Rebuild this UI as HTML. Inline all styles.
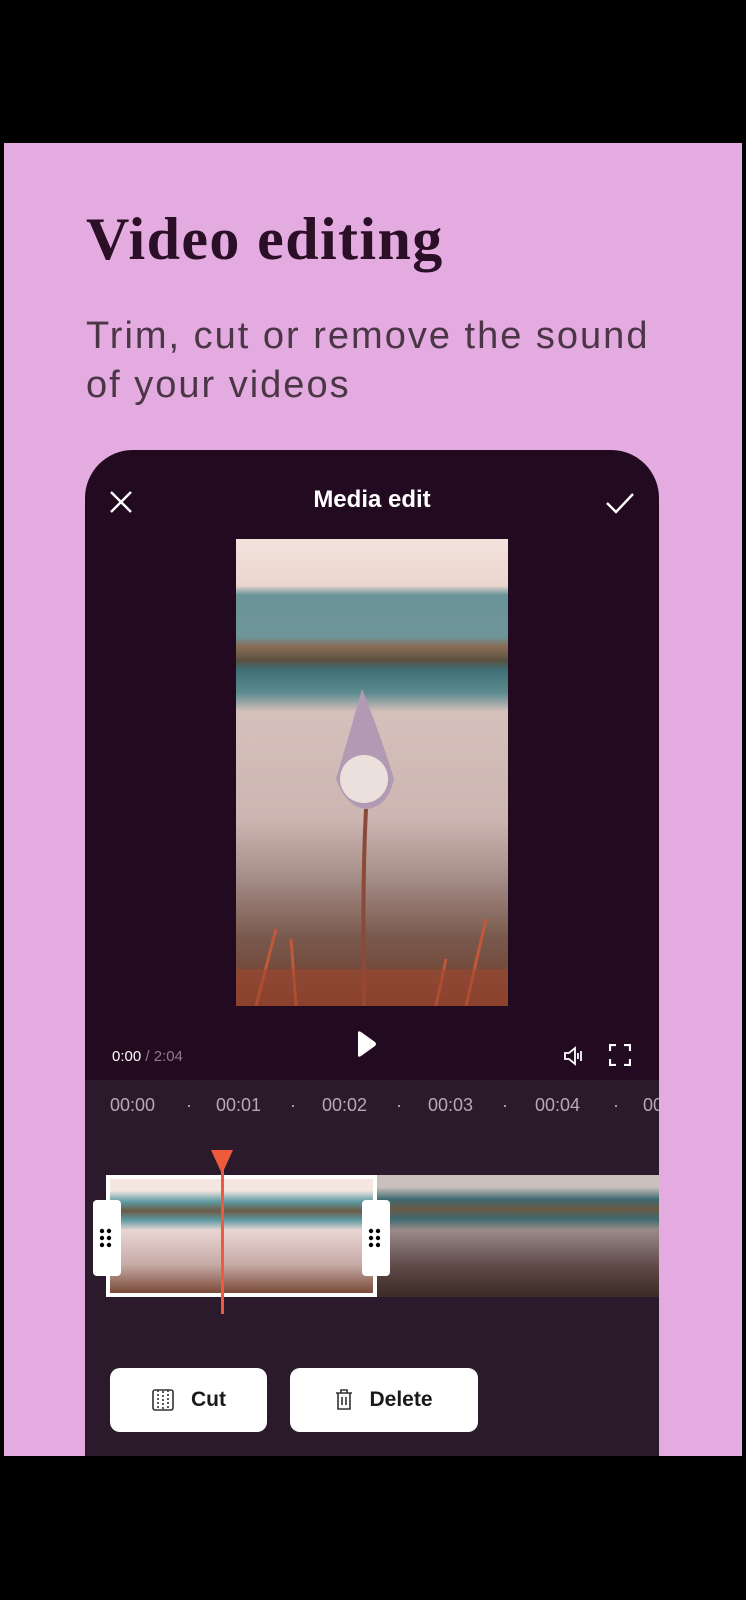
<!DOCTYPE html>
<html><head><meta charset="utf-8"><style>
*{margin:0;padding:0;box-sizing:border-box}
body{width:746px;height:1600px;background:#000;position:relative;overflow:hidden;font-family:"Liberation Sans",sans-serif}
.pink{position:absolute;left:4px;top:143px;width:738px;height:1313px;background:#e3abdf}
h1{position:absolute;left:86px;top:205px;font-family:"Liberation Serif",serif;font-weight:bold;font-size:60px;color:#2a0f26;letter-spacing:1.4px}
.sub{position:absolute;left:86px;top:312px;font-size:38px;line-height:49px;color:#4a3647;letter-spacing:2px}
.card{position:absolute;left:85px;top:450px;width:574px;height:1006px;background:#220a21;border-radius:48px 48px 0 0;overflow:hidden}
.tl{position:absolute;left:0;top:630px;width:574px;height:376px;background:#2b1a2b}
.t{position:absolute;color:#fff}
.photo{position:absolute;left:151px;top:89px;width:272px;height:467px;overflow:hidden;background:linear-gradient(180deg,#f3e2dc 0%,#ead6cf 10%,#6a9399 12%,#6d9599 21%,#8a6c55 23%,#5a5040 26%,#3f6f75 28%,#5d8c90 33%,#d6c0bb 37%,#cdb6b1 60%,#a78f8a 72%,#7a5a4e 85%,#6a3a2a 100%)}
.ticks{position:absolute;top:645px;font-size:18px;color:#b8a8b8}
.strip{position:absolute;left:21px;top:725px;width:553px;height:122px;background:linear-gradient(180deg,#c9c0bb 0%,#c9c0bb 10%,#3e6a70 20%,#6b5a45 28%,#3e6a70 36%,#9a8a88 45%,#5e4a48 75%,#3b2a25 100%)}
.sel{position:absolute;left:21px;top:725px;width:271px;height:122px;border:4px solid #fff;background:linear-gradient(180deg,#f5e6e2 0%,#f5e6e2 10%,#5c9aa2 20%,#6b5a45 28%,#5c9aa2 36%,#e8d6d2 45%,#c6aaa6 75%,#7a4a38 100%)}
.h{position:absolute;top:750px;width:28px;height:76px;background:#fff;border-radius:4px}
.btn{position:absolute;top:918px;height:64px;background:#fff;border-radius:10px;font-weight:bold;font-size:21px;color:#1a1a1a;display:flex;align-items:center;justify-content:center;gap:16px}
</style></head><body>
<div class="pink"></div>
<h1>Video editing</h1>
<div class="sub">Trim, cut or remove the sound<br>of your videos</div>
<div class="card">
 <svg class="t" style="left:24px;top:40px" width="24" height="24" viewBox="0 0 24 24"><path d="M2 2L22 22M22 2L2 22" stroke="#fff" stroke-width="2.4"/></svg>
 <div class="t" style="left:0;width:574px;top:36px;text-align:center;font-weight:bold;font-size:24px">Media edit</div>
 <svg class="t" style="left:520px;top:42px" width="30" height="22" viewBox="0 0 30 22"><path d="M2 11L11 20L28 2" fill="none" stroke="#fff" stroke-width="2.4"/></svg>
 <div class="photo"><svg width="272" height="467" viewBox="0 0 272 467"><path d="M130 270Q126 350 128 467" stroke="#8a4a3a" stroke-width="4" fill="none"/><path d="M126 150Q112 200 100 240Q110 268 130 270Q152 268 158 240Q146 200 126 150Z" fill="#b39ab4"/><ellipse cx="128" cy="240" rx="24" ry="24" fill="#ece0dc"/><path d="M20 467L40 390M60 467L55 400M230 467L250 380M200 467L210 420" stroke="#c0583a" stroke-width="3"/><rect x="0" y="430" width="272" height="37" fill="#a0482e" opacity="0.6"/></svg></div>
 <div class="t" style="left:27px;top:598px;font-size:15px">0:00 <span style="color:#8f7a8f">/ 2:04</span></div>
 <svg class="t" style="left:270px;top:580px" width="22" height="28" viewBox="0 0 22 28"><path d="M3 3Q3 0 6 2L20 12Q22 14 20 16L6 26Q3 28 3 25Z" fill="#fff"/></svg>
 <svg class="t" style="left:478px;top:596px" width="22" height="20" viewBox="0 0 22 20"><path d="M2 7H6L12 2V18L6 13H2Z" fill="none" stroke="#fff" stroke-width="1.8"/><path d="M15 7V13M18 5V15" stroke="#fff" stroke-width="1.8"/></svg>
 <svg class="t" style="left:524px;top:594px" width="22" height="22" viewBox="0 0 22 22"><path d="M1 7V1H7M15 1H21V7M21 15V21H15M7 21H1V15" fill="none" stroke="#fff" stroke-width="2.2"/></svg>
 <div class="tl"></div>
 <div class="ticks" style="left:25px">00:00</div><div class="ticks" style="left:101px">·</div>
 <div class="ticks" style="left:131px">00:01</div><div class="ticks" style="left:205px">·</div>
 <div class="ticks" style="left:237px">00:02</div><div class="ticks" style="left:311px">·</div>
 <div class="ticks" style="left:343px">00:03</div><div class="ticks" style="left:417px">·</div>
 <div class="ticks" style="left:450px">00:04</div><div class="ticks" style="left:528px">·</div>
 <div class="ticks" style="left:558px">00</div>
 <div class="strip"></div>
 <div class="sel"></div>
 <div class="h" style="left:8px"></div><div class="h" style="left:277px"></div>
 <svg class="t" style="left:14px;top:778px" width="14" height="20"><g fill="#000"><circle cx="3" cy="3" r="2.2"/><circle cx="10" cy="3" r="2.2"/><circle cx="3" cy="10" r="2.2"/><circle cx="10" cy="10" r="2.2"/><circle cx="3" cy="17" r="2.2"/><circle cx="10" cy="17" r="2.2"/></g></svg>
 <svg class="t" style="left:283px;top:778px" width="14" height="20"><g fill="#000"><circle cx="3" cy="3" r="2.2"/><circle cx="10" cy="3" r="2.2"/><circle cx="3" cy="10" r="2.2"/><circle cx="10" cy="10" r="2.2"/><circle cx="3" cy="17" r="2.2"/><circle cx="10" cy="17" r="2.2"/></g></svg>
 <div style="position:absolute;left:136px;top:712px;width:3px;height:152px;background:#ee5a3b"></div>
 <svg class="t" style="left:126px;top:700px" width="22" height="24"><path d="M0 0H22L11 24Z" fill="#ee5a3b"/></svg>
 <div class="btn" style="left:25px;width:157px"><svg width="24" height="24" viewBox="0 0 24 24"><rect x="2" y="2" width="20" height="20" rx="2" fill="none" stroke="#333" stroke-width="1.6"/><path d="M7 2V22M17 2V22M12 3V21" stroke="#333" stroke-width="1.6" stroke-dasharray="2 2"/></svg>Cut</div>
 <div class="btn" style="left:205px;width:188px"><svg width="18" height="22" viewBox="0 0 18 22"><path d="M1 4H17M6 4V1H12V4M3 4V20H15V4M7 8V16M11 8V16" fill="none" stroke="#333" stroke-width="1.6"/></svg>Delete</div>
</div>
</body></html>
